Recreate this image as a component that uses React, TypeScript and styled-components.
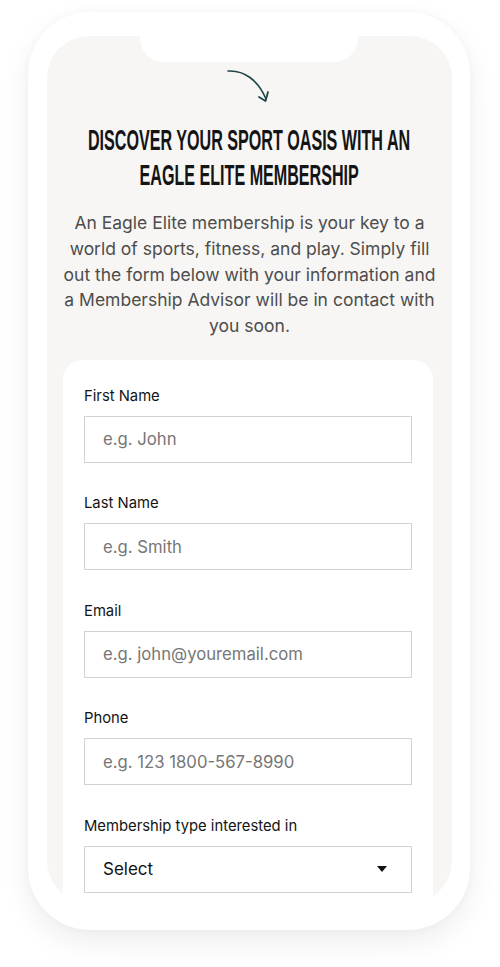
import styled, { createGlobalStyle } from "styled-components";

const fields = [
  { label: "First Name", placeholder: "e.g. John" },
  { label: "Last Name", placeholder: "e.g. Smith" },
  { label: "Email", placeholder: "e.g. john@youremail.com" },
  { label: "Phone", placeholder: "e.g. 123 1800-567-8990" },
];

const GlobalStyle = createGlobalStyle`
  * { box-sizing: border-box; }
  body {
    margin: 0;
    background: #ffffff;
    font-family: Inter, "Noto Sans", sans-serif;
  }
`;

export default function App() {
  return (
    <>
      <GlobalStyle />
      <Page>
        <Phone>
          <Screen>
            <Notch />
            <Arrow width="50" height="40" viewBox="0 0 50 40">
              <path
                d="M2 3 C 18 2, 32 12, 40 31"
                fill="none"
                stroke="#1e4646"
                strokeWidth="1.6"
                strokeLinecap="round"
              />
              <path
                d="M33 29 L39.5 33 L42 24"
                fill="none"
                stroke="#1e4646"
                strokeWidth="1.8"
                strokeLinecap="round"
                strokeLinejoin="round"
              />
            </Arrow>
            <Heading>
              <HeadingLine>DISCOVER YOUR SPORT OASIS WITH AN</HeadingLine>
              <HeadingLine>EAGLE ELITE MEMBERSHIP</HeadingLine>
            </Heading>
            <Intro>
              An Eagle Elite membership is your key to a world of sports,
              fitness, and play. Simply fill out the form below with your
              information and a Membership Advisor will be in contact with you
              soon.
            </Intro>
            <Card>
              {fields.map(({ label, placeholder }) => (
                <Field key={label}>
                  <Label>{label}</Label>
                  <Input placeholder={placeholder} />
                </Field>
              ))}
              <Field>
                <Label>Membership type interested in</Label>
                <SelectBox>
                  <span>Select</span>
                  <Caret width="10" height="6" viewBox="0 0 10 6">
                    <path d="M0 0 H10 L5 6 Z" fill="#111" />
                  </Caret>
                </SelectBox>
              </Field>
            </Card>
          </Screen>
        </Phone>
      </Page>
    </>
  );
}

const Page = styled.div`
  width: 500px;
  height: 967px;
  padding: 12px 30px 0 28px;
  overflow: hidden;
`;

const Phone = styled.div`
  width: 442px;
  height: 918px;
  padding: 24px 18px 27px 19px;
  background: #ffffff;
  border-radius: 62px;
  box-shadow: 0 12px 30px rgba(0, 0, 0, 0.07), 0 0 8px rgba(0, 0, 0, 0.03);
`;

const Screen = styled.div`
  position: relative;
  height: 100%;
  overflow: hidden;
  background: #f7f6f4;
  border-radius: 42px;
  display: flex;
  flex-direction: column;
  align-items: center;

  & > * {
    flex-shrink: 0;
  }
`;

const Notch = styled.div`
  position: absolute;
  top: 0;
  left: 93px;
  width: 218px;
  height: 26px;
  background: #ffffff;
  border-radius: 0 0 24px 24px;
`;

const Arrow = styled.svg`
  margin-top: 32px;
  margin-left: 2px;
  display: block;
`;

const Heading = styled.h1`
  margin: 14px 0 0;
  display: flex;
  flex-direction: column;
  align-items: center;
  font-family: "Liberation Sans", Arial, sans-serif;
  font-weight: 700;
  font-size: 30px;
  line-height: 35px;
  color: #141414;
`;

const HeadingLine = styled.span`
  display: inline-block;
  white-space: nowrap;
  transform: scaleX(0.537);
  transform-origin: center;
`;

const Intro = styled.p`
  margin: 18px 0 0;
  padding: 0 15px;
  text-align: center;
  font-size: 17.5px;
  line-height: 25.8px;
  color: #4d4d4d;
`;

const Card = styled.div`
  width: 370px;
  margin: 21px 0 0 -3px;
  padding: 26px 21px 40px;
  background: #ffffff;
  border-radius: 20px;
  display: flex;
  flex-direction: column;
  gap: 30.5px;
`;

const Field = styled.div`
  display: flex;
  flex-direction: column;
  gap: 10px;
`;

const Label = styled.label`
  font-size: 14.8px;
  line-height: 20px;
  color: #141414;
`;

const Input = styled.input`
  width: 100%;
  height: 47px;
  padding: 0 18px;
  border: 1px solid #d2d2d2;
  border-radius: 0;
  background: #ffffff;
  font-family: Inter, "Noto Sans", sans-serif;
  font-size: 16.7px;
  color: #111;
  outline: none;

  &::placeholder {
    color: #767676;
  }
`;

const SelectBox = styled.div`
  height: 47px;
  padding: 0 24px 0 18px;
  border: 1px solid #d2d2d2;
  display: flex;
  align-items: center;
  justify-content: space-between;
  font-size: 17px;
  color: #111111;
`;

const Caret = styled.svg`
  display: block;
`;
